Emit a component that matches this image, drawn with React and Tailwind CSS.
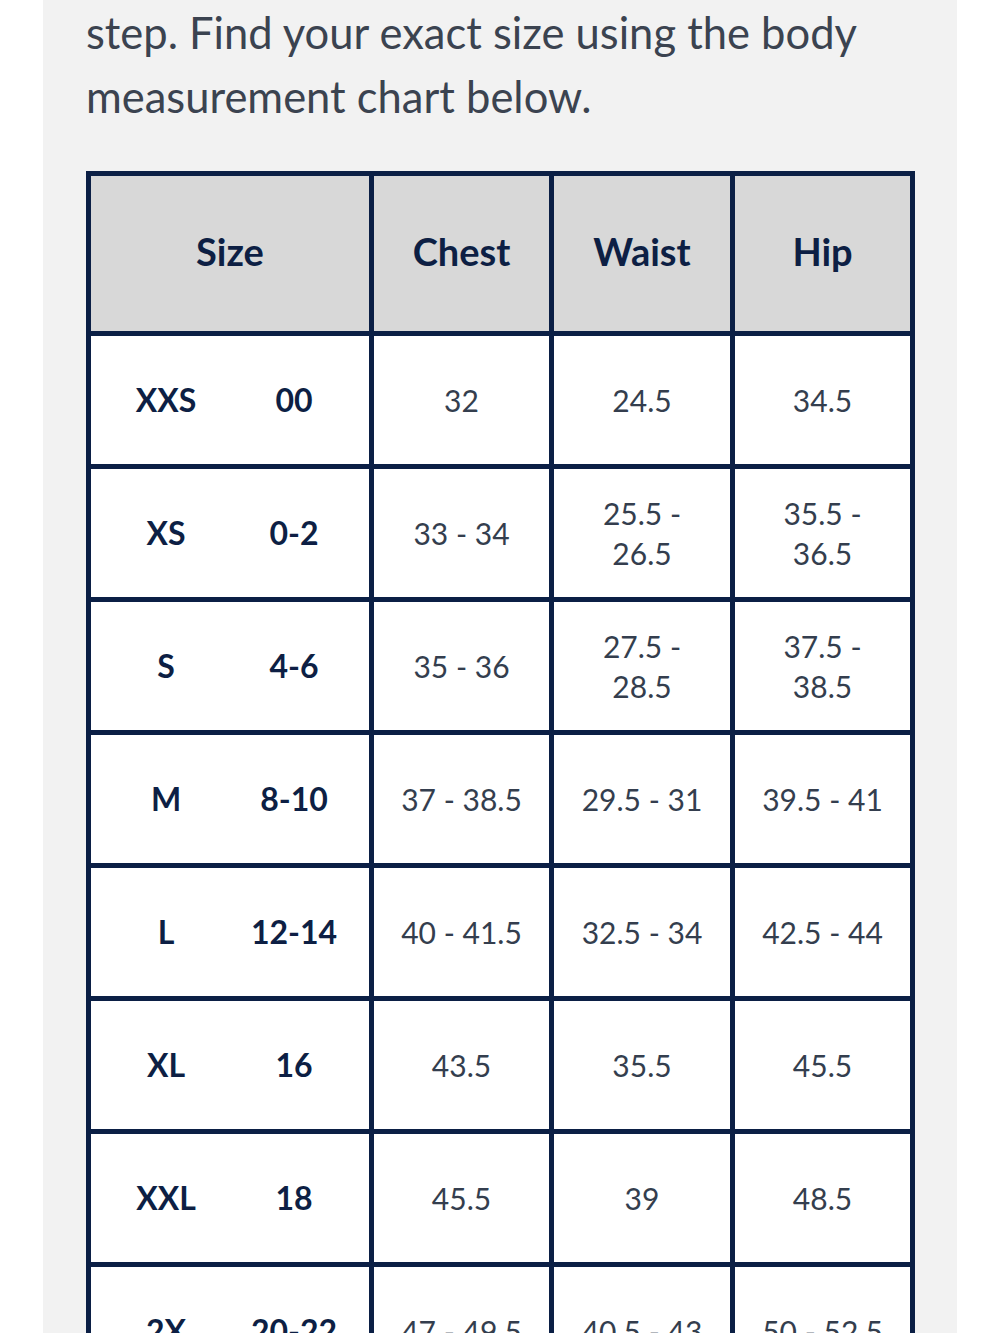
import { Fragment } from 'react'

const rows = [
	{ size: 'XXS', num: '00', chest: '32', waist: '24.5', hip: '34.5' },
	{ size: 'XS', num: '0-2', chest: '33 - 34', waist: '25.5 - 26.5', hip: '35.5 - 36.5' },
	{ size: 'S', num: '4-6', chest: '35 - 36', waist: '27.5 - 28.5', hip: '37.5 - 38.5' },
	{ size: 'M', num: '8-10', chest: '37 - 38.5', waist: '29.5 - 31', hip: '39.5 - 41' },
	{ size: 'L', num: '12-14', chest: '40 - 41.5', waist: '32.5 - 34', hip: '42.5 - 44' },
	{ size: 'XL', num: '16', chest: '43.5', waist: '35.5', hip: '45.5' },
	{ size: 'XXL', num: '18', chest: '45.5', waist: '39', hip: '48.5' },
	{ size: '2X', num: '20-22', chest: '47 - 49.5', waist: '40.5 - 43', hip: '50 - 52.5' },
]

function HeadCell({ children }) {
	return <div className="bg-[#d8d8d8] h-[155px] flex items-center justify-center pb-1 text-[38px] font-bold text-[#0d1f44]">
		{children}
	</div>
}

function Cell({ children }) {
	return <div className="bg-white h-[128px] flex items-center justify-center px-6 text-center text-[30px] leading-[40px] text-[#343e4e]">
		{children}
	</div>
}

export default function App() {
	return (
		<div className="min-h-screen bg-white" style={{ fontFamily: 'Lato, "Noto Sans", sans-serif' }}>
			<div className="ml-[43px] w-[914px] h-[1333px] bg-[#f2f2f2] px-[43px] overflow-hidden">
				<p className="text-[43.5px] leading-[64px] text-[#3b4350]">
					step. Find your exact size using the body measurement chart below.
				</p>

				{/* size chart */}
				<div className="mt-[43px] w-[829px] bg-[#0b1f45] p-[5px] grid grid-cols-[278px_175px_176px_175px] gap-[5px]">
					<HeadCell>Size</HeadCell>
					<HeadCell>Chest</HeadCell>
					<HeadCell>Waist</HeadCell>
					<HeadCell>Hip</HeadCell>
					{rows.map(r => (
						<Fragment key={r.size}>
							<div className="bg-white h-[128px] flex items-center justify-center text-[32px] font-bold text-[#0d1f44]">
								<span className="w-[128px] text-center">{r.size}</span>
								<span className="w-[128px] text-center">{r.num}</span>
							</div>
							<Cell>{r.chest}</Cell>
							<Cell>{r.waist}</Cell>
							<Cell>{r.hip}</Cell>
						</Fragment>
					))}
				</div>
			</div>
		</div>
	)
}
